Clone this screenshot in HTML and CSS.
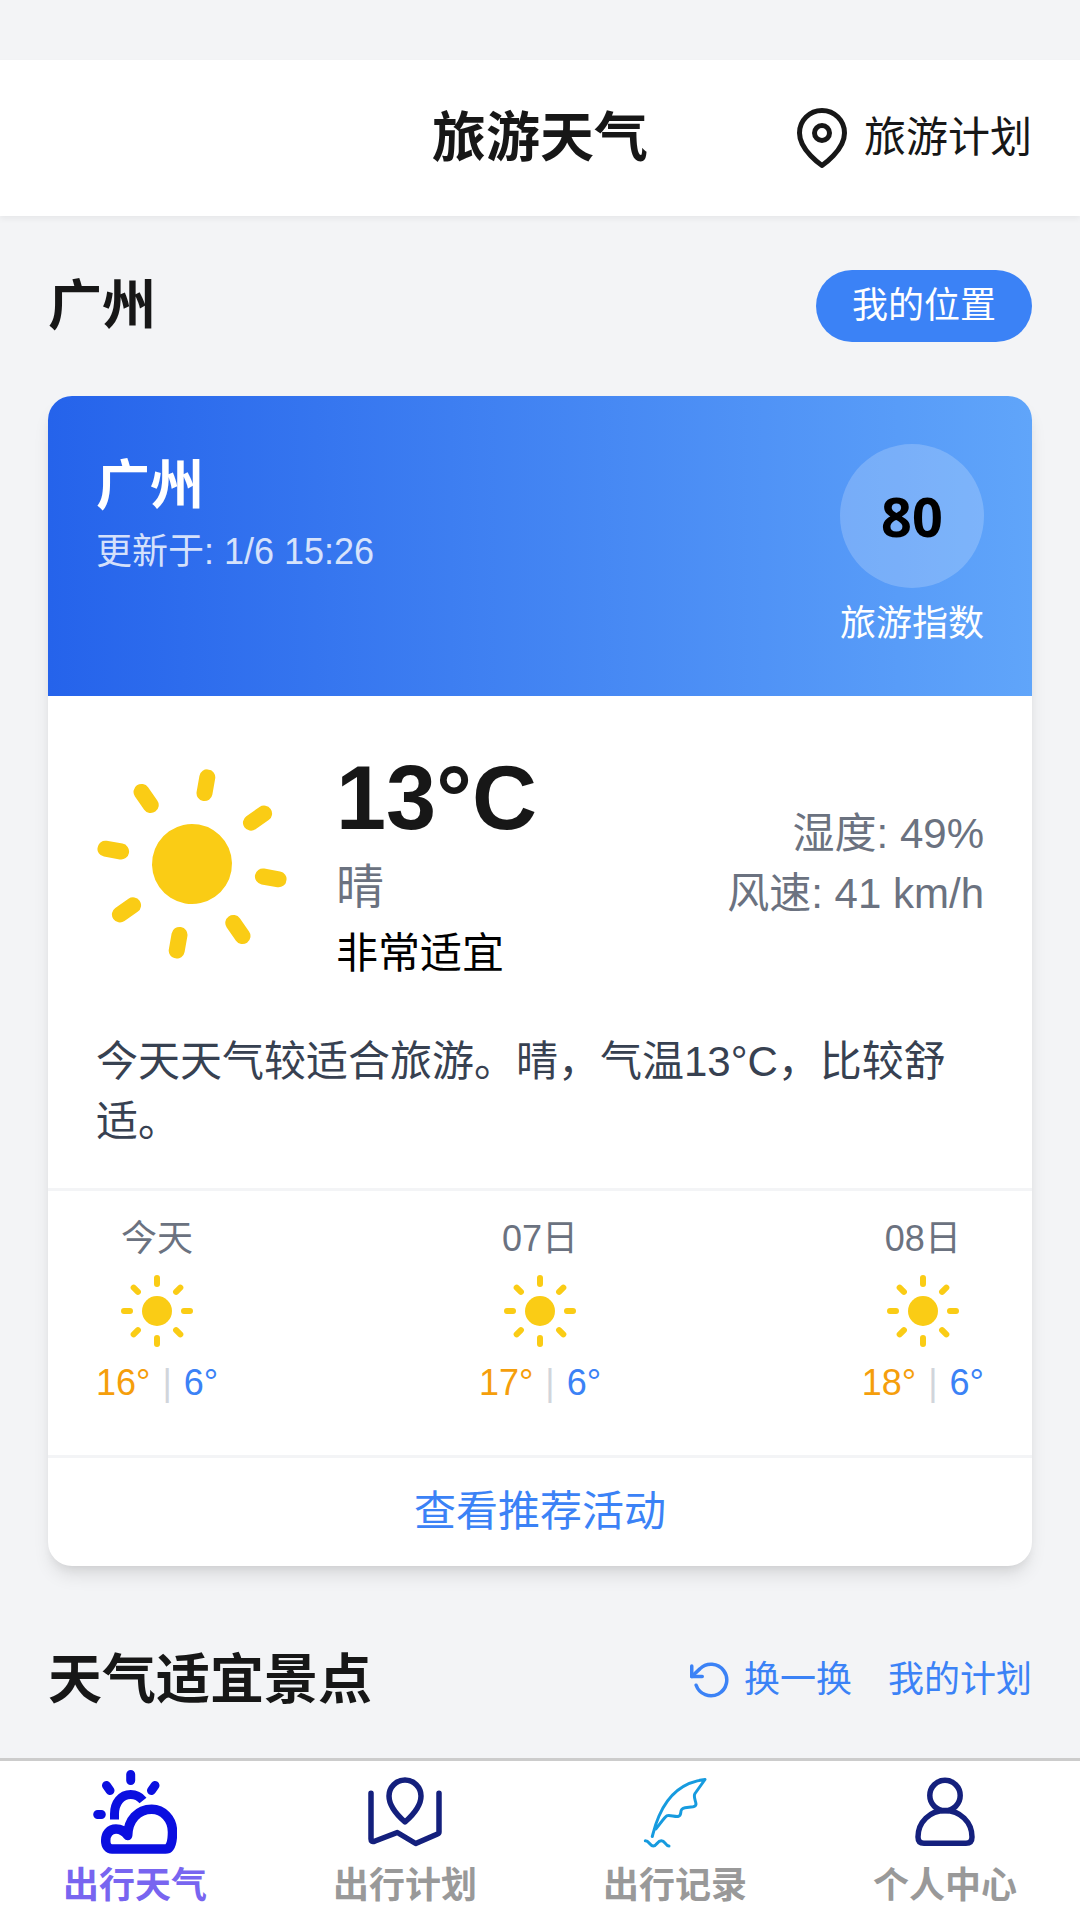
FILE: index.html
```html
<!DOCTYPE html>
<html lang="zh-CN">
<head>
  <meta charset="UTF-8">
  <meta name="viewport" content="width=device-width, initial-scale=1.0">
  <title>旅游天气</title>
  <link rel="stylesheet" href="styles.css">
</head>
<body>
  <!-- shared sun icon -->
  <svg class="sprite" aria-hidden="true">
    <symbol id="sun" viewBox="0 0 24 24">
      <circle cx="12" cy="12" r="5" fill="currentColor"/>
      <path d="M12 1v2M12 21v2M4.22 4.22l1.42 1.42M18.36 18.36l1.42 1.42M1 12h2M21 12h2M4.22 19.78l1.42-1.42M18.36 5.64l1.42-1.42" fill="none" stroke="currentColor" stroke-width="2" stroke-linecap="round"/>
    </symbol>
  </svg>

  <header class="header">
    <h1 class="title">旅游天气</h1>
    <a class="plan-link" href="#plan">
      <svg class="pin" viewBox="0 0 24 24" fill="none" stroke="currentColor" stroke-width="2" stroke-linecap="round" stroke-linejoin="round">
        <path d="M21 10c0 7-9 13-9 13s-9-6-9-13a9 9 0 0 1 18 0z"/>
        <circle cx="12" cy="10" r="3"/>
      </svg>
      旅游计划
    </a>
  </header>

  <main class="content">
    <div class="row">
      <h2 class="title">广州</h2>
      <button class="locate" type="button">我的位置</button>
    </div>

    <section class="card">
      <div class="card-head">
        <div>
          <h3 class="title">广州</h3>
          <p class="updated">更新于: 1/6 15:26</p>
        </div>
        <div class="index">
          <div class="score">80</div>
          <span>旅游指数</span>
        </div>
      </div>

      <div class="card-body">
        <div class="now">
          <svg class="sun-big"><use href="#sun"/></svg>
          <div class="now-main">
            <p class="temp">13°C</p>
            <p class="text">晴</p>
            <p class="level">非常适宜</p>
          </div>
          <div class="now-side">
            <p>湿度: 49%</p>
            <p>风速: 41 km/h</p>
          </div>
        </div>
        <p class="advice">今天天气较适合旅游。晴，气温13°C，比较舒适。</p>
      </div>

      <ul class="forecast">
        <li class="day">
          <span>今天</span>
          <svg class="sun-small"><use href="#sun"/></svg>
          <div class="range"><span class="high">16°</span><span class="bar">|</span><span class="low">6°</span></div>
        </li>
        <li class="day">
          <span>07日</span>
          <svg class="sun-small"><use href="#sun"/></svg>
          <div class="range"><span class="high">17°</span><span class="bar">|</span><span class="low">6°</span></div>
        </li>
        <li class="day">
          <span>08日</span>
          <svg class="sun-small"><use href="#sun"/></svg>
          <div class="range"><span class="high">18°</span><span class="bar">|</span><span class="low">6°</span></div>
        </li>
      </ul>

      <a class="more" href="#activities">查看推荐活动</a>
    </section>

    <div class="row spots">
      <h2 class="title">天气适宜景点</h2>
      <div class="actions">
        <button class="refresh" type="button">
          <svg class="refresh-icon" viewBox="0 0 24 24" fill="none" stroke="currentColor" stroke-width="2" stroke-linecap="round" stroke-linejoin="round">
            <path d="M1 4v6h6"/>
            <path d="M3.51 15a9 9 0 1 0 2.13-9.36L1 10"/>
          </svg>
          换一换
        </button>
        <a href="#my-plan">我的计划</a>
      </div>
    </div>
  </main>

  <nav class="tabbar">
    <a class="tab active" href="#weather">
      <svg viewBox="0 0 84 84" fill="none" stroke="#0b0fe0" stroke-width="9" stroke-linejoin="round">
        <path stroke-linecap="round" d="M37.7 4.5v6M13.5 15.5l3.5 5M62 15.5l-3.5 5M4.7 44.5h3.6"/>
        <path d="M21.5 49.5V44C21.5 33 28 24.5 37.7 24.5c5 0 9 2 12.3 6"/>
        <path stroke-width="9.5" d="M34.7 65.5C31 60.5 27 59 23 59c-6.500 0-10.300 5-10.300 11.500 0 5.500 2.800 8.500 6.300 8.500h53.500c5 0 7-7 7-17C79.500 49 70 39.300 58.700 39.300 45 39.300 35 50 34.700 65.500z"/>
      </svg>
      出行天气
    </a>
    <a class="tab" href="#plans">
      <svg viewBox="0 0 84 84" fill="none" stroke="#14207d" stroke-width="5.5" stroke-linecap="round" stroke-linejoin="round">
        <path d="M8 23.3V69q0 3.500 3.500 2.300L34.300 62.500 52.700 73.500 74.500 64q1.500-.6 1.500-2V23.300"/>
        <path d="M42 52C34 45 26 35.500 26 26a16 16 0 0 1 32 0c0 9.500-8 19-16 26z"/>
      </svg>
      出行计划
    </a>
    <a class="tab" href="#records">
      <svg viewBox="0 0 84 84" fill="none" stroke="#169bdf" stroke-width="3" stroke-linecap="round" stroke-linejoin="round">
        <path d="M19.3 66.500C21 60 22 55 26 46 35 25 50 12 72 9.500L62 23.500c-3 5 5 12-2 13.300l-8 1c-7 1.200-2 7-6.500 8.500-3 .8-9.500-1.800-11.500-.5-3 2-6 7-11 13"/>
        <path d="M12.3 70.700c4 0 4.500 5.300 8 5.300s4-5.300 8-5.300 4 5.300 7.700 5.300"/>
      </svg>
      出行记录
    </a>
    <a class="tab" href="#me">
      <svg viewBox="0 0 84 84" fill="none" stroke="#14207d" stroke-width="5.5" stroke-linejoin="round">
        <circle cx="42" cy="25.5" r="15.2"/>
        <path d="M15 67c0-15 12-26.500 27-26.500S69 52 69 67q0 6.300-6 6.300H21q-6 0-6-6.300z"/>
      </svg>
      个人中心
    </a>
  </nav>
</body>
</html>
```
FILE: styles.css
```css
* {
  box-sizing: border-box;
  margin: 0;
  padding: 0;
}
body {
  display: flex;
  flex-direction: column;
  min-height: 100vh;
  padding-top: 60px;
  background: #f3f4f6;
  color: #171717;
  font-family: "Liberation Sans", "Noto Sans CJK SC", sans-serif;
  font-size: 42px;
  line-height: 60px;
}
a {
  color: inherit;
  text-decoration: none;
}
button {
  border: 0;
  background: none;
  color: inherit;
  font: inherit;
}
svg {
  display: block;
  flex-shrink: 0;
}
.sprite {
  position: absolute;
  width: 0;
  height: 0;
}
.title {
  font-size: 54px;
  line-height: 84px;
  font-weight: bold;
}

/* top bar */
.header {
  display: grid;
  grid-template-columns: 1fr auto 1fr;
  align-items: center;
  padding: 36px 48px;
  background: #fff;
  box-shadow: 0 3px 6px rgba(0, 0, 0, 0.05);
}
.header .title {
  grid-column: 2;
}
.plan-link {
  display: flex;
  align-items: center;
  justify-self: end;
  gap: 12px;
}
.pin {
  width: 60px;
  height: 60px;
}

.content {
  flex: 1;
  padding: 48px 48px 36px;
}
.row {
  display: flex;
  justify-content: space-between;
  align-items: center;
}
.locate {
  padding: 12px 36px;
  border-radius: 36px;
  background: #3b82f6;
  color: #fff;
  font-size: 36px;
  line-height: 48px;
}

/* weather card */
.card {
  margin-top: 48px;
  border-radius: 24px;
  overflow: hidden;
  background: #fff;
  box-shadow: 0 12px 18px -3px rgba(0, 0, 0, 0.1), 0 6px 12px -6px rgba(0, 0, 0, 0.1);
}
.card-head {
  display: flex;
  justify-content: space-between;
  padding: 48px;
  background: linear-gradient(to right, #2563eb, #60a5fa);
  color: #fff;
  font-size: 36px;
  line-height: 48px;
}
.updated {
  opacity: 0.8;
}
.index {
  display: flex;
  flex-direction: column;
  align-items: center;
  gap: 12px;
}
.score {
  display: flex;
  justify-content: center;
  align-items: center;
  width: 144px;
  height: 144px;
  border-radius: 50%;
  background: rgba(255, 255, 255, 0.2);
  color: #000;
  font-family: "Noto Sans", sans-serif;
  font-size: 54px;
  font-weight: bold;
}
.card-body {
  padding: 48px 48px 36px;
}
.now {
  display: flex;
  align-items: center;
  gap: 48px;
  color: #6b7280;
}
.sun-big {
  width: 192px;
  height: 192px;
  color: #facc15;
  transform: rotate(10deg);
  overflow: visible;
}
.now-main {
  flex: 1;
}
.temp {
  color: #171717;
  font-size: 90px;
  line-height: 108px;
  font-weight: bold;
}
.text {
  font-size: 48px;
  line-height: 72px;
}
.level {
  color: #000;
}
.now-side {
  text-align: right;
}
.advice {
  margin-top: 48px;
  color: #374151;
}

.forecast {
  display: flex;
  justify-content: space-between;
  padding: 24px 48px 48px;
  border-top: 3px solid #f3f4f6;
  list-style: none;
  font-size: 36px;
  line-height: 48px;
}
.day {
  display: flex;
  flex-direction: column;
  align-items: center;
  gap: 12px;
  color: #6b7280;
}
.sun-small {
  width: 72px;
  height: 72px;
  color: #facc15;
}
.range {
  display: flex;
}
.high {
  color: #f59e0b;
}
.bar {
  margin: 0 12px;
  color: #d1d5db;
}
.low {
  color: #3b82f6;
}
.more {
  display: block;
  padding: 24px;
  border-top: 3px solid #f3f4f6;
  color: #3b82f6;
  text-align: center;
}

.spots {
  margin-top: 72px;
}
.actions {
  display: flex;
  gap: 36px;
  color: #3b82f6;
  font-size: 36px;
  line-height: 48px;
}
.refresh {
  display: flex;
  align-items: center;
  gap: 12px;
}
.refresh-icon {
  width: 42px;
  height: 42px;
}

/* bottom tabs */
.tabbar {
  display: flex;
  padding: 9px 0;
  border-top: 3px solid #ccc;
  background: #fff;
}
.tab {
  display: flex;
  flex: 1;
  flex-direction: column;
  align-items: center;
  gap: 6px;
  color: #999;
  font-size: 36px;
  line-height: 51px;
  font-weight: bold;
}
.tab svg {
  width: 84px;
  height: 84px;
}
.tab.active {
  color: #7865f0;
}
```
